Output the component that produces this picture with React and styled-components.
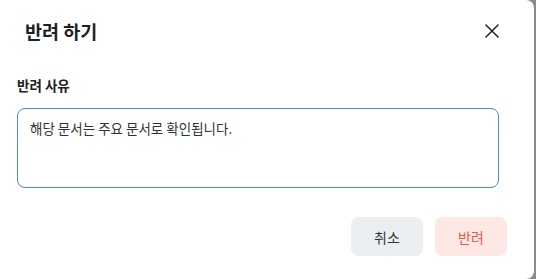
import React from "react";
import styled, { createGlobalStyle } from "styled-components";

const GlobalStyle = createGlobalStyle`
  html, body {
    margin: 0;
    padding: 0;
    background: #8a8a8a;
    font-family: "Noto Sans CJK KR", "Noto Sans", sans-serif;
  }
`;

const Modal = styled.div`
  width: 534px;
  height: 279px;
  background: #fff;
  border-radius: 0 8px 8px 0;
  box-sizing: border-box;
  display: flex;
  flex-direction: column;
`;

const Header = styled.div`
  display: flex;
  align-items: center;
  justify-content: space-between;
  padding: 20px 34px 0 25px;
  height: 22px;
`;

const Title = styled.h2`
  margin: 0;
  font-size: 18.5px;
  font-weight: 700;
  color: #1a1f29;
`;

const CloseButton = styled.button`
  border: none;
  background: none;
  padding: 0;
  width: 16px;
  height: 16px;
  display: flex;
  align-items: center;
  justify-content: center;
  cursor: pointer;
`;

const Body = styled.div`
  padding: 0 17px;
  margin-top: 34px;
`;

const Label = styled.div`
  font-size: 13.5px;
  font-weight: 700;
  color: #222;
  line-height: 18px;
`;

const TextArea = styled.textarea`
  display: block;
  margin-top: 14px;
  width: 482px;
  height: 80px;
  box-sizing: border-box;
  border: 1px solid #4a86d4;
  border-radius: 8px;
  padding: 9px 12px;
  font-family: inherit;
  font-size: 13.5px;
  line-height: 20px;
  color: #333;
  resize: none;
  outline: none;
`;

const Footer = styled.div`
  display: flex;
  justify-content: flex-end;
  gap: 12px;
  padding-right: 27px;
  margin-top: 29px;
`;

const Button = styled.button`
  width: 72px;
  height: 39px;
  border: none;
  border-radius: 8px;
  font-family: inherit;
  font-size: 14px;
  background: ${(p) => (p.danger ? "#fde8e6" : "#eceff2")};
  color: ${(p) => (p.danger ? "#ea5b4b" : "#333")};
  cursor: pointer;
`;

export default function App() {
  return (
    <>
      <GlobalStyle />
      <Modal>
        <Header>
          <Title>반려 하기</Title>
          <CloseButton aria-label="닫기">
            <svg width="14" height="14" viewBox="0 0 14 14">
              <path d="M1 1L13 13M13 1L1 13" stroke="#222" strokeWidth="1.5" strokeLinecap="round" />
            </svg>
          </CloseButton>
        </Header>
        <Body>
          <Label>반려 사유</Label>
          <TextArea defaultValue="해당 문서는 주요 문서로 확인됩니다." />
        </Body>
        <Footer>
          <Button>취소</Button>
          <Button danger>반려</Button>
        </Footer>
      </Modal>
    </>
  );
}
